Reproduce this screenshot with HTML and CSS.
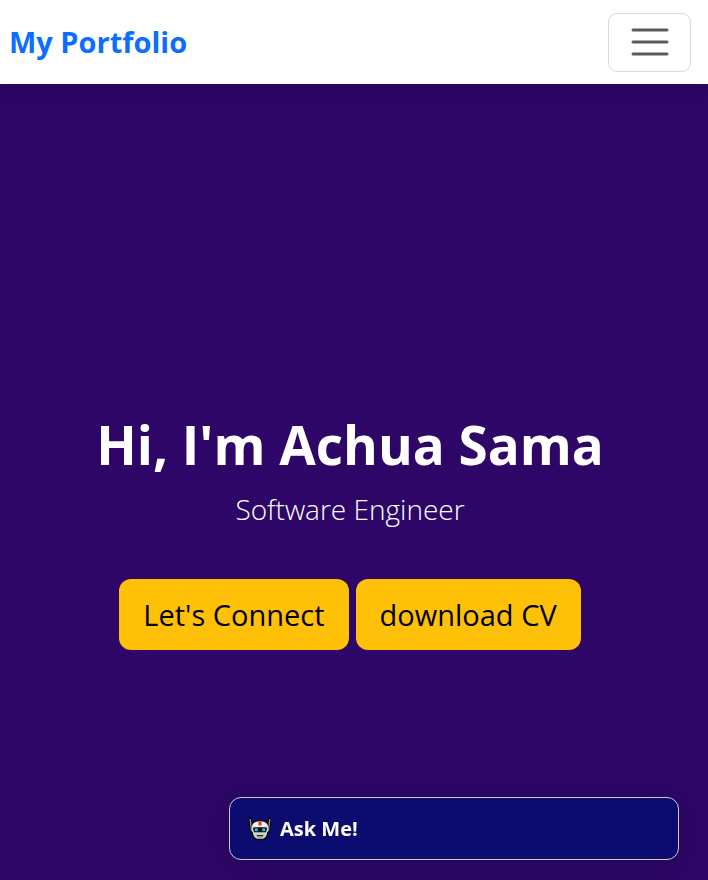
FILE: index.html
```html
<!DOCTYPE html>
<html lang="en">
<head>
  <meta charset="utf-8">
  <meta name="viewport" content="width=device-width, initial-scale=1">
  <title>My Portfolio</title>
  <link rel="stylesheet" href="styles.css">
</head>
<body>
  <header class="navbar">
    <a class="brand" href="#home">My Portfolio</a>
    <button class="toggler" type="button" aria-label="Toggle navigation">
      <svg class="toggler-icon" viewBox="0 0 46 46" aria-hidden="true">
        <path d="M6 11h34M6 23h34M6 35h34"/>
      </svg>
    </button>
  </header>

  <main class="hero" id="home">
    <h1 class="title">Hi, I'm Achua Sama</h1>
    <p class="subtitle">Software Engineer</p>
    <div class="actions">
      <a class="btn" href="#contact">Let's Connect</a>
      <a class="btn" href="#cv">download CV</a>
    </div>
  </main>

  <button class="chat" type="button">
    <svg class="robot" viewBox="0 0 24 24" aria-hidden="true">
      <path d="M2 1.500v8M22 1.500v8" stroke="#080808" stroke-width="2.600" stroke-linecap="round"/>
      <path d="M3.200 9Q4 3.500 12 3.500T20.800 9L21.800 14l-1.800 1.500q-.8 5-4.500 7h-7q-3.700-2-4.500-7L2.200 14z" fill="#d0d0d0" stroke="#080808" stroke-width="1.500"/>
      <path d="M2.200 2.500l1.300 11M21.800 2.500l-1.300 11" stroke="#9b9da1" stroke-width="1.200" stroke-linecap="round"/>
      <path d="M5 8.500Q6.500 4.700 12 4.700t7 3.800l-.6 1.500H5.600z" fill="#f4f4f4"/>
      <path d="M10.400 4.500h3.200v4h-3.200z" fill="#f03a17"/>
      <path d="M6 10.200h12l1 1.300-1 3.800H6l-1-3.800z" fill="#111"/>
      <path d="M6.800 11.200h3v3h-3zM14.200 11.200h3v3h-3z" fill="#20b9d6"/>
      <path d="M8.800 18.700h6.400" stroke="#222" stroke-width="1.300"/>
      <path d="M9.500 21h5" stroke="#999" stroke-width="1.200"/>
    </svg>
    <span>Ask Me!</span>
  </button>
</body>
</html>
```
FILE: styles.css
```css
* {
  box-sizing: border-box;
}

body {
  display: flex;
  flex-direction: column;
  min-height: 100vh;
  margin: 0;
  background: #2d0668;
  font-family: "Segoe UI", "Open Sans", "Noto Sans", sans-serif;
}

.navbar {
  position: relative;
  display: flex;
  align-items: center;
  justify-content: space-between;
  height: 84px;
  padding: 0 17px 0 9px;
  background: #fff;
  box-shadow: 0 6px 30px rgba(0, 0, 0, 0.15);
}

.brand {
  color: #0d6efd;
  font-size: 29px;
  font-weight: 700;
  line-height: 44px;
  text-decoration: none;
}

.toggler {
  display: flex;
  align-items: center;
  justify-content: center;
  width: 83px;
  height: 59px;
  padding: 0;
  background: transparent;
  border: 1px solid #dadada;
  border-radius: 9px;
}

.toggler-icon {
  width: 46px;
  height: 46px;
  fill: none;
  stroke: #595c5f;
  stroke-width: 3;
  stroke-linecap: round;
}

.hero {
  display: flex;
  flex: 1;
  flex-direction: column;
  align-items: center;
  justify-content: center;
  padding: 96px 8px 0 0;
  text-align: center;
}

.title {
  margin: 0 0 8px;
  color: #fff;
  font-size: 53px;
  font-weight: 700;
  line-height: 68px;
}

.subtitle {
  margin: 0 0 48px;
  color: #fff;
  font-size: 28px;
  font-weight: 300;
  line-height: 44px;
}

.actions {
  display: flex;
  flex-wrap: wrap;
  justify-content: center;
  gap: 7px;
}

.btn {
  padding: 14px 24px;
  color: #000;
  background: #ffc107;
  border-radius: 12px;
  font-size: 29px;
  line-height: 43px;
  text-decoration: none;
}

.chat {
  position: fixed;
  right: 29px;
  bottom: 20px;
  display: flex;
  align-items: center;
  gap: 8px;
  width: 450px;
  max-width: calc(100vw - 58px);
  padding: 15px 18px;
  color: #fff;
  background: #0b0b70;
  border: 1px solid #ccc;
  border-radius: 12px;
  box-shadow: 0 4px 30px rgba(0, 0, 0, 0.2);
  font-family: inherit;
  font-size: 20px;
  font-weight: 700;
  line-height: 31px;
  text-align: left;
}

.robot {
  flex: none;
  width: 24px;
  height: 24px;
  fill: none;
}
```
